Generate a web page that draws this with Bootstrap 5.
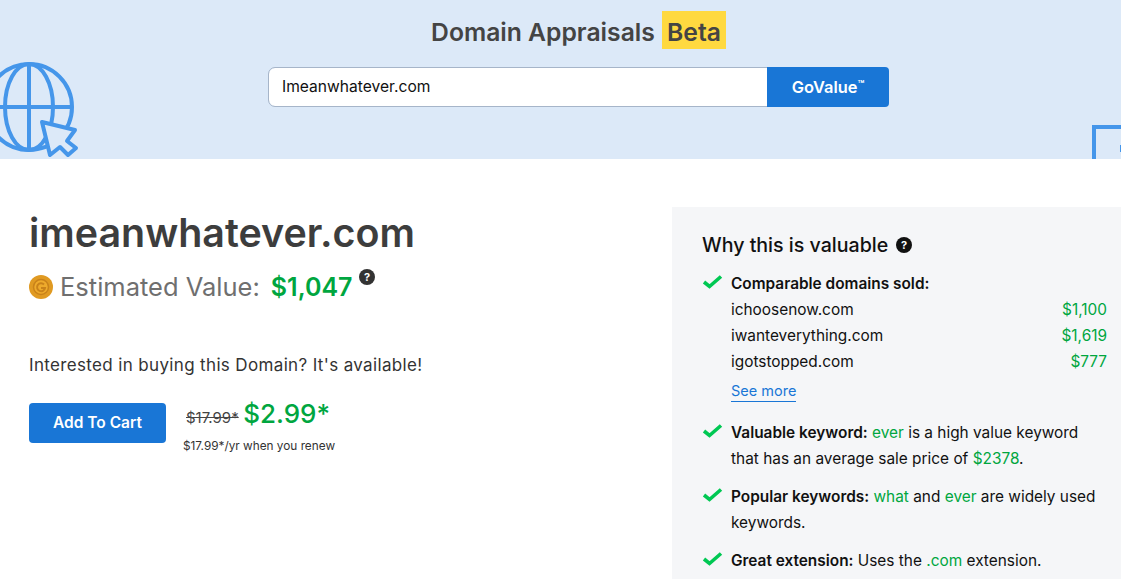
<!DOCTYPE html>
<html lang="en">
<head>
  <meta charset="UTF-8">
  <meta name="viewport" content="width=device-width, initial-scale=1.0">
  <title>Domain Appraisals</title>
  <link href="https://cdn.jsdelivr.net/npm/bootstrap@5.3.3/dist/css/bootstrap.min.css" rel="stylesheet">
  <style>
    body {
      font-family: Inter, "Liberation Sans", sans-serif;
      color: #111;
      overflow: hidden;
      height: 579px;
    }
    .hero {
      height: 159px;
      background-color: #dce9f8;
      overflow: hidden;
      padding-top: 11px;
      padding-left: 36px;
    }
    .hero-title {
      font-size: 24.7px;
      font-weight: 600;
      line-height: 42px;
      color: #444;
      margin-bottom: 14px;
    }
    .beta-tag {
      background-color: #ffd940;
      padding: 0 5px;
      margin-left: 1px;
      display: inline-block;
      height: 38px;
      line-height: 42px;
    }
    .search-box {
      width: 621px;
      height: 40px;
    }
    .search-box .form-control {
      border: 1px solid #a6b5c9;
      border-radius: 7px 0 0 7px;
      padding-left: 13px;
      font-size: 15.6px;
      color: #111;
    }
    .btn-go {
      width: 122px;
      background-color: #1976d6;
      color: #fff;
      font-size: 16.4px;
      font-weight: 600;
      border: 0;
      border-radius: 0 4px 4px 0;
    }
    .btn-go sup {
      font-size: 11px;
      top: -5px;
    }
    .globe-art { left: -16px; top: 60px; }
    .square-art { left: 1092px; top: 125px; }
    .main-area { padding-top: 48px; }
    .left-side { padding-left: 29px; width: 672px; flex-shrink: 0; }
    .domain-name {
      font-size: 39.4px;
      font-weight: 600;
      line-height: 56px;
      color: #3d3d3d;
      margin-top: -2px;
      margin-bottom: 0;
    }
    .value-line {
      font-size: 25.5px;
      color: #6f6f6f;
      line-height: 36px;
      margin-top: 8px;
    }
    .coin-art { margin-right: 7px; }
    .value-num { color: #00a63f; font-weight: 600; font-size: 25px; margin-left: 11px; }
    .help-mark { margin-left: 7px; margin-bottom: 20px; }
    .interest {
      font-size: 17px;
      letter-spacing: .35px;
      color: #333;
      margin-top: 48px;
      margin-bottom: 26px;
      line-height: 24px;
    }
    .btn-cart {
      width: 137px;
      height: 40px;
      background-color: #1976d6;
      color: #fff;
      font-size: 15.5px;
      font-weight: 600;
      border: 0;
      border-radius: 4px;
    }
    .price-side { margin-left: 20px; }
    .price-row { margin-top: -4px; }
    .old-price { font-size: 15px; color: #444; text-decoration: line-through; }
    .new-price { font-size: 26px; font-weight: 500; color: #00a63f; line-height: 30px; }
    .renew-note { font-size: 11.8px; color: #333; margin-top: 8px; margin-left: -3px; }
    .why-panel {
      width: 449px;
      background-color: #f5f6f8;
      padding: 24px 14px 40px 30px;
      flex-shrink: 0;
    }
    .why-title { font-size: 19.6px; font-weight: 500; line-height: 28px; margin-bottom: 12px; }
    .why-item { display: flex; gap: 8px; font-size: 15.4px; line-height: 26px; margin-bottom: 12px; }
    .why-item b { font-weight: 600; }
    .why-check { flex-shrink: 0; margin-top: 3px; }
    .green-txt { color: #00a63f; }
    .sold-row { display: flex; justify-content: space-between; }
    .see-more {
      display: inline-block;
      color: #1976d6;
      font-size: 14.5px;
      text-decoration: none;
      border-bottom: 1px solid #1976d6;
      line-height: 20px;
      margin-top: 6px;
      margin-bottom: 6px;
    }
  </style>
</head>
<body>
<div class="hero position-relative text-center">
  <svg class="globe-art position-absolute" width="100" height="99" viewBox="0 0 100 99" fill="none" stroke="#4596ea" stroke-width="4">
    <circle cx="45" cy="47" r="43"/>
    <ellipse cx="45" cy="47" rx="24" ry="43"/>
    <path d="M45 4V90M0 47H88"/>
    <path d="M58 62 L91 70 L83 81 L92 88 L84 95 L76 87 L66 95 Z" fill="#dce9f8" stroke-linejoin="round"/>
  </svg>
  <svg class="square-art position-absolute" width="29" height="34" viewBox="0 0 29 34" fill="none">
    <path d="M2 34V2H29" stroke="#4596ea" stroke-width="4"/>
    <rect x="28" y="20" width="4" height="7" fill="#4596ea"/>
  </svg>
  <h1 class="hero-title">Domain Appraisals <span class="beta-tag">Beta</span></h1>
  <div class="search-box input-group mx-auto">
    <input type="text" class="form-control" value="Imeanwhatever.com">
    <button class="btn btn-go" type="button">GoValue<sup>™</sup></button>
  </div>
</div>

<div class="main-area d-flex">
  <div class="left-side">
    <h2 class="domain-name">imeanwhatever.com</h2>
    <div class="value-line d-flex align-items-center">
      <svg class="coin-art" width="24" height="24" viewBox="0 0 24 24">
        <circle cx="12" cy="12" r="12" fill="#e09a22"/>
        <circle cx="12" cy="12" r="7.5" fill="#eeaa2c" stroke="#c9821a" stroke-width="1.5"/>
        <path d="M15 9.5A4 4 0 1 0 16 13H12" fill="none" stroke="#c9821a" stroke-width="2"/>
      </svg>
      <span>Estimated Value:</span>
      <span class="value-num">$1,047</span>
      <svg class="help-mark" width="16" height="16" viewBox="0 0 16 16">
        <circle cx="8" cy="8" r="8" fill="#333"/>
        <text x="8" y="12" text-anchor="middle" font-size="11" font-weight="700" fill="#fff" font-family="Inter">?</text>
      </svg>
    </div>
    <p class="interest">Interested in buying this Domain? It's available!</p>
    <div class="d-flex">
      <button class="btn btn-cart" type="button">Add To Cart</button>
      <div class="price-side">
        <div class="price-row"><span class="old-price">$17.99*</span> <span class="new-price">$2.99*</span></div>
        <div class="renew-note">$17.99*/yr when you renew</div>
      </div>
    </div>
  </div>

  <div class="why-panel">
    <h3 class="why-title d-flex align-items-center gap-2">Why this is valuable
      <svg width="16" height="16" viewBox="0 0 16 16">
        <circle cx="8" cy="8" r="8" fill="#111"/>
        <text x="8" y="12" text-anchor="middle" font-size="11" font-weight="700" fill="#fff" font-family="Inter">?</text>
      </svg>
    </h3>
    <div class="why-item">
      <svg class="why-check" width="21" height="15" viewBox="0 0 21 15"><path d="M2 8l5.5 4.5L19 2.5" fill="none" stroke="#00c853" stroke-width="3.6"/></svg>
      <div class="flex-grow-1">
        <b>Comparable domains sold:</b>
        <div class="sold-row"><span>ichoosenow.com</span><span class="green-txt">$1,100</span></div>
        <div class="sold-row"><span>iwanteverything.com</span><span class="green-txt">$1,619</span></div>
        <div class="sold-row"><span>igotstopped.com</span><span class="green-txt">$777</span></div>
        <a class="see-more" href="#">See more</a>
      </div>
    </div>
    <div class="why-item">
      <svg class="why-check" width="21" height="15" viewBox="0 0 21 15"><path d="M2 8l5.5 4.5L19 2.5" fill="none" stroke="#00c853" stroke-width="3.6"/></svg>
      <div><b>Valuable keyword:</b> <span class="green-txt">ever</span> is a high value keyword that has an average sale price of <span class="green-txt">$2378</span>.</div>
    </div>
    <div class="why-item">
      <svg class="why-check" width="21" height="15" viewBox="0 0 21 15"><path d="M2 8l5.5 4.5L19 2.5" fill="none" stroke="#00c853" stroke-width="3.6"/></svg>
      <div><b>Popular keywords:</b> <span class="green-txt">what</span> and <span class="green-txt">ever</span> are widely used keywords.</div>
    </div>
    <div class="why-item">
      <svg class="why-check" width="21" height="15" viewBox="0 0 21 15"><path d="M2 8l5.5 4.5L19 2.5" fill="none" stroke="#00c853" stroke-width="3.6"/></svg>
      <div><b>Great extension:</b> Uses the <span class="green-txt">.com</span> extension.</div>
    </div>
  </div>
</div>
<script src="https://cdn.jsdelivr.net/npm/bootstrap@5.3.3/dist/js/bootstrap.bundle.min.js"></script>
</body>
</html>
